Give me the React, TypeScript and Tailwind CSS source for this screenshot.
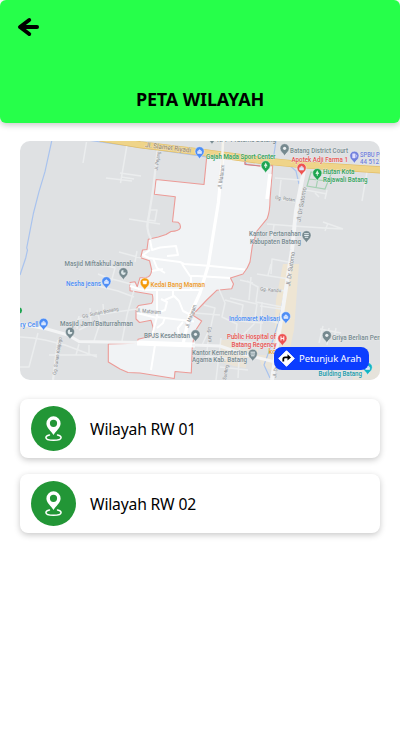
import React from "react";

type PinKind = "shop" | "dot" | "clock" | "tree" | "food" | "hospital" | "fuel" | "office";

function Pin({ x, y, color, kind = "dot" }: { x: number; y: number; color: string; kind?: PinKind }) {
  return (
    <g transform={`translate(${x} ${y})`}>
      <path d="M0 6.7C-.7 3.7-4.6 2.6-4.6-1.2A4.6 4.6 0 0 1 4.6-1.2C4.6 2.6.7 3.7 0 6.7Z" fill={color} stroke="#f3f5f7" strokeWidth=".5" />
      {kind === "dot" && <circle cy="-1.2" r="1.6" fill="#e9eef0" />}
      {kind === "shop" && <path d="M-2 1V-1.3H2V1ZM-1-1.5a1 1.2 0 0 1 2 0" fill="#dbe8ff" stroke="#dbe8ff" strokeWidth=".6" />}
      {kind === "clock" && <path d="M0-3.4A2.4 2.4 0 1 0 2.4-1H0Z" fill="#dfe9eb" />}
      {kind === "tree" && <path d="M0-4 1.9-.2H.5V1.4H-.5V-.2H-1.9Z" fill="#d8f2e0" />}
      {kind === "food" && <path d="M-2-2.8H2L1.500.3H-1.500Z" fill="#fff" stroke="#fff" strokeWidth=".5" />}
      {kind === "hospital" && <path d="M-1.4-3.2V1M1.4-3.2V1M-1.4-1.1H1.4" stroke="#fff" strokeWidth="1" fill="none" />}
      {kind === "fuel" && <path d="M-1.8 1V-3.2H.8V1ZM1.5-2.5 2.3-1.7V.5" fill="#e0e1ff" stroke="#e0e1ff" strokeWidth=".5" />}
      {kind === "office" && <path d="M-2.3-2.8H2.3M-2.3-1H2.3M-1.7.8H1.7" stroke="#e7eff2" strokeWidth="1" />}
    </g>
  );
}

interface LabelProps {
  x: number;
  y: number;
  w: number;
  color: string;
  children: string;
  rotate?: number;
  size?: number;
}

function Label({ x, y, w, color, children, rotate = 0, size = 6.5 }: LabelProps) {
  return (
    <text
      transform={`translate(${x} ${y}) rotate(${rotate})`}
      textLength={w}
      lengthAdjust="spacingAndGlyphs"
      fontSize={size}
      fontWeight={rotate === 0 ? 500 : 400}
      fill={color}
      stroke="#eef0f2"
      strokeWidth=".8"
      strokeOpacity=".6"
      paintOrder="stroke"
    >
      {children}
    </text>
  );
}

const SLATE = "#76898f";
const BLUE = "#4d8df5";
const RED = "#ea5350";
const GREEN = "#31a25a";
const STREET = "#838689";

const REGION =
  "M207 154 204 184.5 156 179.500 154.300 194.300 175.300 196.700 172.500 221.700 178 222.300Q181 224 180.300 228 179 231 171 231.500L166 234.500 158.300 237 148.300 239.300 147 249.500 142.500 250 140.700 257.700 149.500 260.700 151.700 270Q151 277 146 277.500L140 277.700 137.300 286.700 135 281.700 130 282.500 130 290.700 152.300 294.500Q154 302 151 303.500L138.500 305.500 136 309V319L139.500 322.500 151 320.300 153.300 328 151.500 336 138 339.300 137.300 343.300 108.300 344 108.300 362 120 369 128 372.500 140 373 174.300 378.500 175 371.500 191.300 373 192.300 346.300 195 331.300 201.700 321 193.300 315.500 195 312.300 206.700 300 216.700 290.300 231.700 288.700 233.500 284 230.500 278 243 274Q248 268 250 262L252.300 246 257 231 267.300 218.300Q270 211 270 200L272.700 165.500 260 166 245 164.300 245 158Z";

function RegionMap() {
  return (
    <svg viewBox="20 141 360 239" className="block h-full w-full font-['Roboto',sans-serif]">
      <rect x="20" y="141" width="360" height="239" fill="#dfe1e3" />

      {/* built-up strips */}
      <g fill="#eee5d3">
        <path d="M283 264H299L294 330 290 348H274L276 300Z" />
        <path d="M221 340H238L240 349H258V358H246V368L234 366 221 362Z" opacity=".8" />
        <path d="M258 355H275V372L262 366Z" opacity=".7" />
        <path d="M353 372 380 364V380H353Z" opacity=".5" />
      </g>

      {/* waterways */}
      <g fill="none" stroke="#a9c3ee" strokeWidth="1.2">
        <path d="M51.7 141 45 171.7 39 191.7 33.5 213 26.7 248 27.5 250 25.7 258 20 275" />
        <path d="M90 140.500 140 147.500 200 156 247 163.500M276 141 273 161M270.500 165Q269 185 268 210L262 222" />
        <path d="M273 160Q290 164 296 171L299 184M297 218 291 250 285 290 279 320 271 346 264 365 270 378" />
      </g>

      <path d={REGION} fill="#f1f3f5" stroke="#ec9b97" strokeWidth="1.100" strokeLinejoin="round" />
      <path d="M270 174 267 199" stroke="#fff" strokeWidth="3.500" />

      {/* minor streets outside the region */}
      <g fill="none" stroke="#ebedee" strokeWidth="1.500" strokeLinejoin="round">
        <path d="M86.5 142 83 163M127 145 120.500 183M106 178 132 181M120 173 141 176M121 177 134 179M129 219 160 224M119 252 141 258M137 251 135 262" />
        <path d="M147 227 150 210 157 210 155 221 148 220" />
        <path d="M101 264 115 268 112 279 131 284M98 274 113 280M98 286 118 291 134 297M134 290 127 315 122 341M76 327 78 319 95 315 137 309" />
        <path d="M20 337 33 338 45 340 65 345 97 357M38 333 29 367H20M79 344 76 355M89 345V355M49 355H97M90 308 91 324 79 330M103 304 104 315M97 310 100 323 94 341M79 316 77 329" />
        <path d="M58 340 53 380" strokeWidth="2.200" />
        <path d="M275 178 300 180M281 180 279 199 295 202M306 190 327 194M315 193 319 197M327 190 325 199M367 172 362 201" />
        <path d="M267 224 293 226 324 228 343 229M323 222 343 229M328 223 325 231M274 225 271 244M271 264 268 275M257 274 289 279M263 288 286 291M260 306 281 309M263 319 278 323M288 262 272 259 271 274" />
        <path d="M219 289 225 303 222 317 237 324 235 341 258 343M204 305 215 308 211 326 202 345M225 300 243 305 240 321 263 323M195 313 220 315M230 298 257 304 254 324 240 338M247 281 258 287 256 302 282 307M240 280 253 283M251 277 249 300" />
        <path d="M208 342 206 361M221 338 216 380M240 341 238 378M207 356 238 360M220 367 248 370M262 302 260 343" />
        <path d="M320 329 341 333M323 326 319 343M329 328 327 345M336 328 334 339" />
      </g>

      {/* connecting roads */}
      <g fill="none" stroke="#f3f4f5" strokeLinejoin="round">
        <path d="M158 146 153 190 149 215Q145 229 151 239" strokeWidth="2.200" stroke="#ebedee" />
        <path d="M305 165 296 211 292 250 282 314 277 345 272 380" strokeWidth="4" />
        <path d="M20 324 47 329 68 335 79 341.500 137 342.500" strokeWidth="3" />
        <path d="M137 343 195 345" stroke="#fff" strokeWidth="5" />
        <path d="M192 345 220 346 243 354 275 362" strokeWidth="3" />
        <path d="M223 155 218.300 203 208.300 265 200 293 189 317 183 344" strokeWidth="3.200" stroke="#fff" />
      </g>

      {/* lanes inside the region */}
      <g fill="none" stroke="#fff" strokeWidth="2" strokeLinejoin="round">
        <path d="M150 240 152 250 160 247.500 176 246 178 255 167 256M150 250 143 255 149 258 180 262 184 264 208 265.700 245 269.500" />
        <path d="M153 258 157 268 165 273M152 271 163 269M182 264 190 276 197 276 230 278M191 276V291" />
        <path d="M130 286 139 289 145 290 200 290M157 291 157 317 152 335M161 299 167 302 165 310 157 313M165 300 174 296 179 301 183 311 191 315M173 296V291" />
        <path d="M157 317 194 321.500M137 313 157 318M157 328 163 323 165 317M179 338 178 328 183 322M155 345 151 370" />
      </g>

      {/* primary road */}
      <path d="M100 138 140 144.7 200 152 265 161 306 165 382 170" fill="none" stroke="#e2bd67" strokeWidth="7.200" />
      <path d="M100 138 140 144.7 200 152 265 161 306 165 382 170" fill="none" stroke="#efd489" strokeWidth="5.800" />
      <path d="M223 141 222 165" stroke="#f5f3ed" strokeWidth="2.500" />
      <path d="M245 160V164.5L260 166" fill="none" stroke="#cf8087" strokeWidth="1" />

      {/* city park */}
      <g fill="none" stroke="#a4d0b2" strokeWidth="1.2">
        <path d="M311 172 331 174 325 189 307 186ZM309 179 328 181M319 173 316 188" />
      </g>

      {/* street names */}
      <Label x={145} y={147} w={46} color="#8d795d" rotate={7} size={6.8}>Jl. Slamet Riyadi</Label>
      <Label x={157.5} y={170.5} w={19} color={STREET} rotate={-81} size={5}>Jl. Pejang</Label>
      <Label x={221.500} y={189} w={24} color={STREET} rotate={-83} size={5.5}>Jl. Mataram</Label>
      <Label x={300.500} y={222} w={35} color={STREET} rotate={-80} size={6}>Jl. Dr Sutomo</Label>
      <Label x={275} y={199} w={20} color={STREET} rotate={8} size={5}>Gg. Rotan</Label>
      <Label x={290} y={286.500} w={35} color={STREET} rotate={-82} size={6}>Jl. Dr Sutomo</Label>
      <Label x={260} y={290.500} w={21} color={STREET} rotate={5} size={5}>Gg. Kandu</Label>
      <Label x={82.500} y={318} w={37} color={STREET} rotate={-12} size={5}>Gg. Sunan Bonang</Label>
      <Label x={56} y={375} w={38} color={STREET} rotate={-81} size={5}>Gg. Sunan Kalijogo</Label>
      <Label x={136} y={312} w={25} color={STREET} rotate={5} size={5.5}>Jl. Mataram</Label>
      <Label x={188.500} y={328} w={24} color={STREET} rotate={-70} size={5.5}>Jl. Mataram</Label>
      <Label x={208} y={327} w={15} color={STREET} rotate={88} size={5}>Gg. Jati</Label>
      <Label x={226} y={380} w={15} color={STREET} rotate={-80} size={5}>Sunting</Label>
      <Label x={276} y={378} w={15} color={STREET} rotate={-80} size={5}>Jl. Dr S</Label>

      {/* places */}
      <Label x={217} y={142.3} w={59} color={SLATE}>KPP Pratama Batang</Label>
      <Pin x={212} y={138} color={SLATE} />
      <Label x={206} y={158.7} w={69.5} color={GREEN}>Gajah Mada Sport Center</Label>
      <Pin x={199.6} y={152.5} color={BLUE} kind="shop" />
      <Pin x={265.7} y={166.500} color="#1ea551" kind="tree" />
      <Label x={290} y={152.7} w={58} color={SLATE}>Batang District Court</Label>
      <Pin x={284.6} y={149.500} color={SLATE} />
      <Label x={291.5} y={161.7} w={56.5} color={RED}>Apotek Adji Farma 1</Label>
      <Pin x={301.6} y={169} color="#ef5350" kind="shop" />
      <Label x={360} y={156.700} w={27} color="#7180dc">SPBU Pert</Label>
      <Label x={360} y={163.9} w={19} color="#7180dc">44 512</Label>
      <Pin x={354.4} y={157} color="#7180dc" kind="fuel" />
      <Label x={323} y={174.300} w={31.5} color={GREEN}>Hutan Kota</Label>
      <Label x={323} y={181.5} w={44.5} color={GREEN}>Rajawali Batang</Label>
      <Pin x={317.3} y={174.3} color="#1ea551" kind="tree" />
      <Label x={249} y={236.300} w={52} color={SLATE}>Kantor Pertanahan</Label>
      <Label x={250} y={243.5} w={51} color={SLATE}>Kabupaten Batang</Label>
      <Pin x={306.5} y={236.5} color={SLATE} kind="office" />

      <Label x={64.5} y={266.3} w={68.500} color={SLATE}>Masjid Miftakhul Jannah</Label>
      <Pin x={123.4} y={273.5} color={SLATE} kind="clock" />
      <Label x={66} y={285.5} w={35} color={BLUE}>Nesha jeans</Label>
      <Pin x={106.4} y={282.5} color={BLUE} kind="shop" />
      <circle cx="19" cy="310.5" r="3" fill="#1ea551" />
      <Label x={10.5} y={327.3} w={28} color={BLUE}>Story Cell</Label>
      <Pin x={43.6} y={324} color={BLUE} kind="shop" />
      <Label x={60} y={326} w={73} color={SLATE}>Masjid Jami'Baiturrahman</Label>
      <Pin x={70} y={333} color={SLATE} kind="clock" />
      <Label x={150.5} y={287} w={54.5} color="#ef9b27">Kedai Bang Maman</Label>
      <Pin x={144.8} y={283.7} color="#f59a08" kind="food" />
      <Label x={144} y={338.3} w={46} color={SLATE}>BPJS Kesehatan</Label>
      <Pin x={195.5} y={335.5} color={SLATE} />
      <Label x={192} y={354.7} w={55} color={SLATE}>Kantor Kementerian</Label>
      <Label x={192} y={361.7} w={55} color={SLATE}>Agama Kab. Batang</Label>
      <Pin x={252.8} y={355} color={SLATE} kind="office" />
      <Label x={229} y={320.5} w={51} color={BLUE}>Indomaret Kalisari</Label>
      <Pin x={285.9} y={317.5} color={BLUE} kind="shop" />
      <Label x={227} y={339.3} w={49} color={RED}>Public Hospital of</Label>
      <Label x={231.5} y={346.5} w={45} color={RED}>Batang Regency</Label>
      <Label x={268.500} y={353.500} w={12} color="#ef9b27">kop</Label>
      <Pin x={282.4} y={339.5} color="#ef5350" kind="hospital" />
      <Label x={332} y={339.5} w={53} color={SLATE}>Griya Berlian Perm</Label>
      <Pin x={326.8} y={336.5} color={SLATE} />
      <Label x={318.5} y={375.7} w={43.5} color="#159aa8">Building Batang</Label>
      <Pin x={367.7} y={368.500} color="#12b5c4" kind="shop" />
    </svg>
  );
}

function RegionIcon() {
  return (
    <svg viewBox="0 0 45 45" className="h-[45px] w-[45px] shrink-0">
      <circle cx="22.5" cy="22.5" r="22.5" fill="#229636" />
      <path fillRule="evenodd" fill="#fff" d="M22.5 10.3A7.1 7.1 0 0 0 15.4 17.4C15.4 21.7 20 24.6 22.5 29 25 24.6 29.6 21.7 29.6 17.4A7.1 7.1 0 0 0 22.5 10.3ZM22.5 13.7A3.6 3.6 0 1 1 22.5 20.9 3.6 3.6 0 0 1 22.5 13.7Z" />
      <path d="M18.500 29C16.5 29.500 14.9 30.300 14.9 31.500 14.9 33.300 18.300 34.300 22.500 34.300S30.100 33.300 30.100 31.500C30.100 30.300 28.500 29.500 26.500 29" fill="none" stroke="#fff" strokeWidth="1.500" strokeLinecap="round" />
    </svg>
  );
}

function RegionCard({ name }: { name: string }) {
  return (
    <button className="flex h-[59px] w-full items-start rounded-lg bg-white pl-[11px] pt-[7px] text-left shadow-[0_2px_6px_rgba(0,0,0,0.22)]">
      <RegionIcon />
      <span className="ml-[14px] mt-[11px] whitespace-nowrap text-[15.7px] leading-6 tracking-[-0.19px] text-black">{name}</span>
    </button>
  );
}

export default function App() {
  return (
    <div className="min-h-[747px] w-full bg-white font-['Noto_Sans','Open_Sans',sans-serif]">
      <header className="flex h-[123px] flex-col justify-between rounded-md bg-[#26ff4a] shadow-[0_2px_6px_rgba(0,0,0,0.22)]">
        <button aria-label="Kembali" className="ml-[17px] mt-[17px] w-fit">
          <svg viewBox="0 0 23 20" className="block h-5 w-[23px]" fill="none" stroke="#000" strokeLinecap="round" strokeLinejoin="round">
            <path d="M12.200 3 3 10 12.200 17" strokeWidth="4" />
            <path d="M4 10H20" strokeWidth="4" />
          </svg>
        </button>
        <h1 className="mb-3 text-center text-[18px] font-bold leading-6 tracking-[-0.13px] text-black">PETA WILAYAH</h1>
      </header>

      <main className="flex flex-col px-5 pt-[18px]">
        <section className="relative h-[239px] overflow-hidden rounded-[10px]">
          <RegionMap />
          <button className="absolute bottom-[10px] right-[11px] flex h-[23px] w-[95px] items-center rounded-lg bg-[#0b3dff] pl-[4px] text-white">
            <svg viewBox="0 0 17 17" className="h-[17px] w-[17px] shrink-0">
              <path d="M8.5.7 16.3 8.5 8.5 16.3.7 8.5Z" fill="#fff" stroke="#fff" strokeLinejoin="round" />
              <path d="M5.3 11.5V9Q5.300 7.400 7 7.400H10" fill="none" stroke="#000" strokeWidth="1.800" />
              <path d="M9.5 4.2 13 7.4 9.5 10.6Z" fill="#000" />
            </svg>
            <span className="ml-[4px] whitespace-nowrap text-[9.5px] leading-4 tracking-[-0.06px]">Petunjuk Arah</span>
          </button>
        </section>
        <div className="mt-[19px] flex flex-col gap-4">
          <RegionCard name="Wilayah RW 01" />
          <RegionCard name="Wilayah RW 02" />
        </div>
      </main>
    </div>
  );
}
